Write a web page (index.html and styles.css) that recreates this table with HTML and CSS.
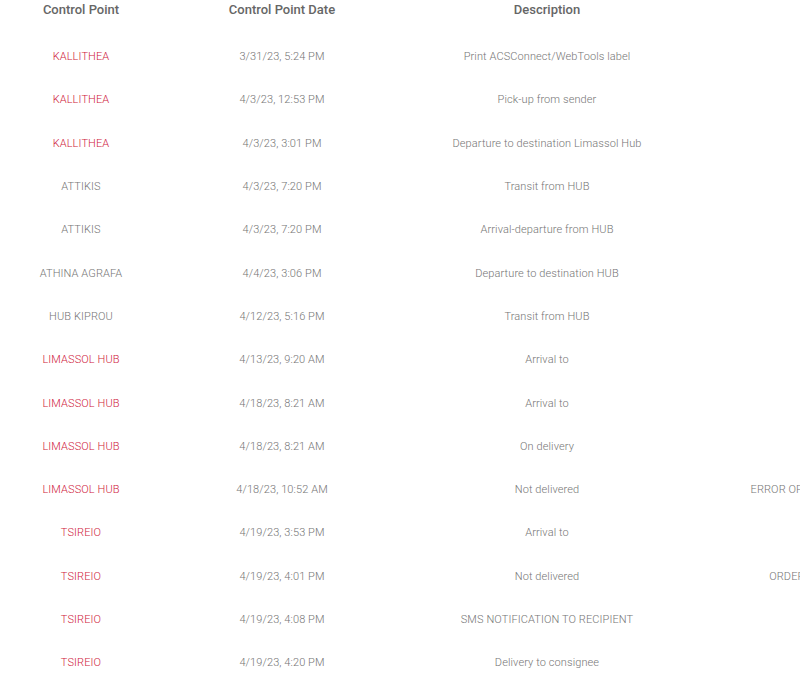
FILE: index.html
```html
<!DOCTYPE html>
<html>
<head>
<meta charset="utf-8">
<link rel="stylesheet" href="styles.css">
</head>
<body>
<div class="table">
  <div class="row head">
    <div class="c c1">Control Point</div>
    <div class="c c2">Control Point Date</div>
    <div class="c c3">Description</div>
    <div class="c c4"></div>
  </div>
  <div class="row"><div class="c c1 red">KALLITHEA</div><div class="c c2">3/31/23, 5:24 PM</div><div class="c c3">Print ACSConnect/WebTools label</div><div class="c c4"></div></div>
  <div class="row"><div class="c c1 red">KALLITHEA</div><div class="c c2">4/3/23, 12:53 PM</div><div class="c c3">Pick-up from sender</div><div class="c c4"></div></div>
  <div class="row"><div class="c c1 red">KALLITHEA</div><div class="c c2">4/3/23, 3:01 PM</div><div class="c c3">Departure to destination Limassol Hub</div><div class="c c4"></div></div>
  <div class="row"><div class="c c1">ATTIKIS</div><div class="c c2">4/3/23, 7:20 PM</div><div class="c c3">Transit from HUB</div><div class="c c4"></div></div>
  <div class="row"><div class="c c1">ATTIKIS</div><div class="c c2">4/3/23, 7:20 PM</div><div class="c c3">Arrival-departure from HUB</div><div class="c c4"></div></div>
  <div class="row"><div class="c c1">ATHINA AGRAFA</div><div class="c c2">4/4/23, 3:06 PM</div><div class="c c3">Departure to destination HUB</div><div class="c c4"></div></div>
  <div class="row"><div class="c c1">HUB KIPROU</div><div class="c c2">4/12/23, 5:16 PM</div><div class="c c3">Transit from HUB</div><div class="c c4"></div></div>
  <div class="row"><div class="c c1 red">LIMASSOL HUB</div><div class="c c2">4/13/23, 9:20 AM</div><div class="c c3">Arrival to</div><div class="c c4"></div></div>
  <div class="row"><div class="c c1 red">LIMASSOL HUB</div><div class="c c2">4/18/23, 8:21 AM</div><div class="c c3">Arrival to</div><div class="c c4"></div></div>
  <div class="row"><div class="c c1 red">LIMASSOL HUB</div><div class="c c2">4/18/23, 8:21 AM</div><div class="c c3">On delivery</div><div class="c c4"></div></div>
  <div class="row"><div class="c c1 red">LIMASSOL HUB</div><div class="c c2">4/18/23, 10:52 AM</div><div class="c c3">Not delivered</div><div class="c c4">ERROR OF ADDRESS</div></div>
  <div class="row"><div class="c c1 red">TSIREIO</div><div class="c c2">4/19/23, 3:53 PM</div><div class="c c3">Arrival to</div><div class="c c4"></div></div>
  <div class="row"><div class="c c1 red">TSIREIO</div><div class="c c2">4/19/23, 4:01 PM</div><div class="c c3">Not delivered</div><div class="c c4">ORDER HELD</div></div>
  <div class="row"><div class="c c1 red">TSIREIO</div><div class="c c2">4/19/23, 4:08 PM</div><div class="c c3">SMS NOTIFICATION TO RECIPIENT</div><div class="c c4"></div></div>
  <div class="row"><div class="c c1 red">TSIREIO</div><div class="c c2">4/19/23, 4:20 PM</div><div class="c c3">Delivery to consignee</div><div class="c c4"></div></div>
</div>
</body>
</html>
```

FILE: styles.css
```css
html, body {
  margin: 0;
  padding: 0;
  overflow: hidden;
  background: #ffffff;
}
body {
  font-family: Roboto, "Liberation Sans", sans-serif;
  font-weight: 300;
  font-size: 11px;
  letter-spacing: 0.1px;
  color: #757575;
}
.table {
  width: 912px;
  display: flex;
  flex-direction: column;
}
.row {
  display: flex;
  align-items: center;
  height: 43.3px;
}
.row.head {
  height: 18px;
  margin-bottom: 17px;
  font-weight: 500;
  font-size: 13px;
  letter-spacing: 0;
  color: #666666;
}
.c {
  text-align: center;
  white-space: nowrap;
}
.c1 { width: 162px; }
.c2 { width: 240px; }
.c3 { width: 290px; }
.c4 { width: 220px; }
.red { color: #cf1a3c; }
```
